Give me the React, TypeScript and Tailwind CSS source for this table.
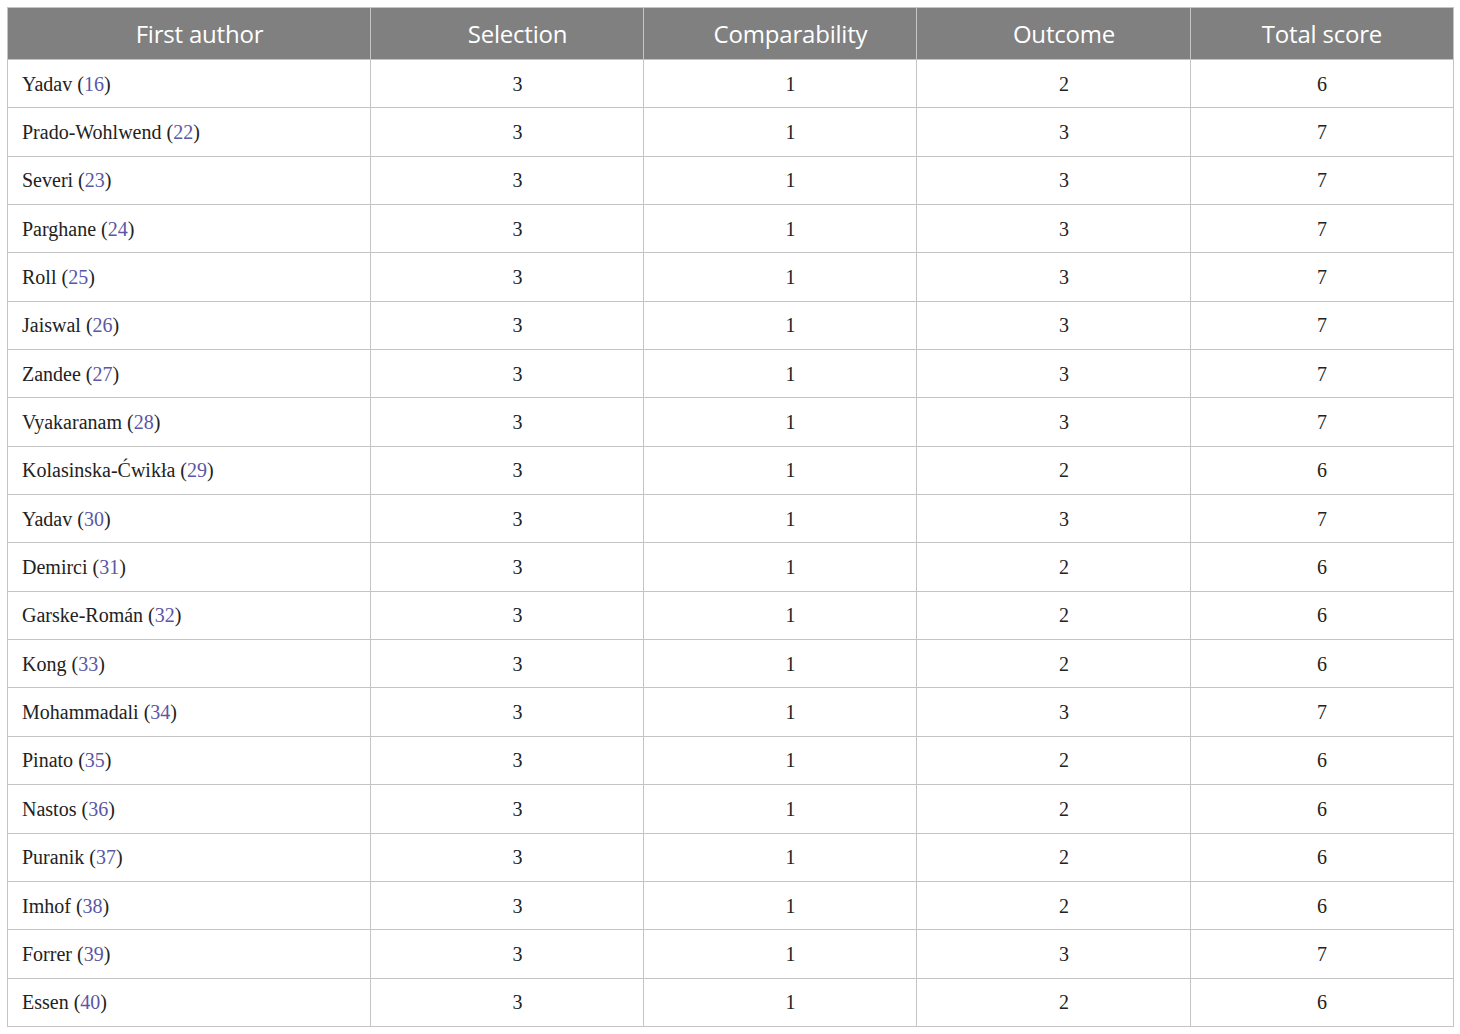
const rows: [string, string, number, number, number, number][] = [
  ["Yadav", "16", 3, 1, 2, 6],
  ["Prado-Wohlwend", "22", 3, 1, 3, 7],
  ["Severi", "23", 3, 1, 3, 7],
  ["Parghane", "24", 3, 1, 3, 7],
  ["Roll", "25", 3, 1, 3, 7],
  ["Jaiswal", "26", 3, 1, 3, 7],
  ["Zandee", "27", 3, 1, 3, 7],
  ["Vyakaranam", "28", 3, 1, 3, 7],
  ["Kolasinska-Ćwikła", "29", 3, 1, 2, 6],
  ["Yadav", "30", 3, 1, 3, 7],
  ["Demirci", "31", 3, 1, 2, 6],
  ["Garske-Román", "32", 3, 1, 2, 6],
  ["Kong", "33", 3, 1, 2, 6],
  ["Mohammadali", "34", 3, 1, 3, 7],
  ["Pinato", "35", 3, 1, 2, 6],
  ["Nastos", "36", 3, 1, 2, 6],
  ["Puranik", "37", 3, 1, 2, 6],
  ["Imhof", "38", 3, 1, 2, 6],
  ["Forrer", "39", 3, 1, 3, 7],
  ["Essen", "40", 3, 1, 2, 6],
];

const headers = ["First author", "Selection", "Comparability", "Outcome", "Total score"];

export default function App() {
  return (
    <div className="min-h-screen bg-white pt-[7px] pl-[7px]">
      <table className="w-[1446px] border-collapse table-fixed">
        <colgroup>
          <col className="w-[363px]" />
          <col className="w-[273px]" />
          <col className="w-[273px]" />
          <col className="w-[274px]" />
          <col className="w-[263px]" />
        </colgroup>
        <thead>
          <tr className="h-[52px] bg-[#808080]">
            {headers.map((h, i) => (
              <th
                key={h}
                className={
                  "border border-[#c4c4c4] text-center align-middle font-normal text-white text-[24px] font-['Open_Sans',sans-serif] tracking-[-0.2px] " +
                  (i < 4 ? "pl-[21px]" : "")
                }
              >
                {h}
              </th>
            ))}
          </tr>
        </thead>
        <tbody className="font-['Liberation_Serif',serif] text-[20px] text-[#222]">
          {rows.map(([name, ref, s, c, o, t], i) => (
            <tr key={i} className="h-[48.35px]">
              <td className="border border-[#c4c4c4] pl-[14px] align-middle">
                {name} (<span className="text-[#5b56a6]">{ref}</span>)
              </td>
              <td className="border border-[#c4c4c4] pl-[21px] text-center align-middle">{s}</td>
              <td className="border border-[#c4c4c4] pl-[21px] text-center align-middle">{c}</td>
              <td className="border border-[#c4c4c4] pl-[21px] text-center align-middle">{o}</td>
              <td className="border border-[#c4c4c4] text-center align-middle">{t}</td>
            </tr>
          ))}
        </tbody>
      </table>
    </div>
  );
}
